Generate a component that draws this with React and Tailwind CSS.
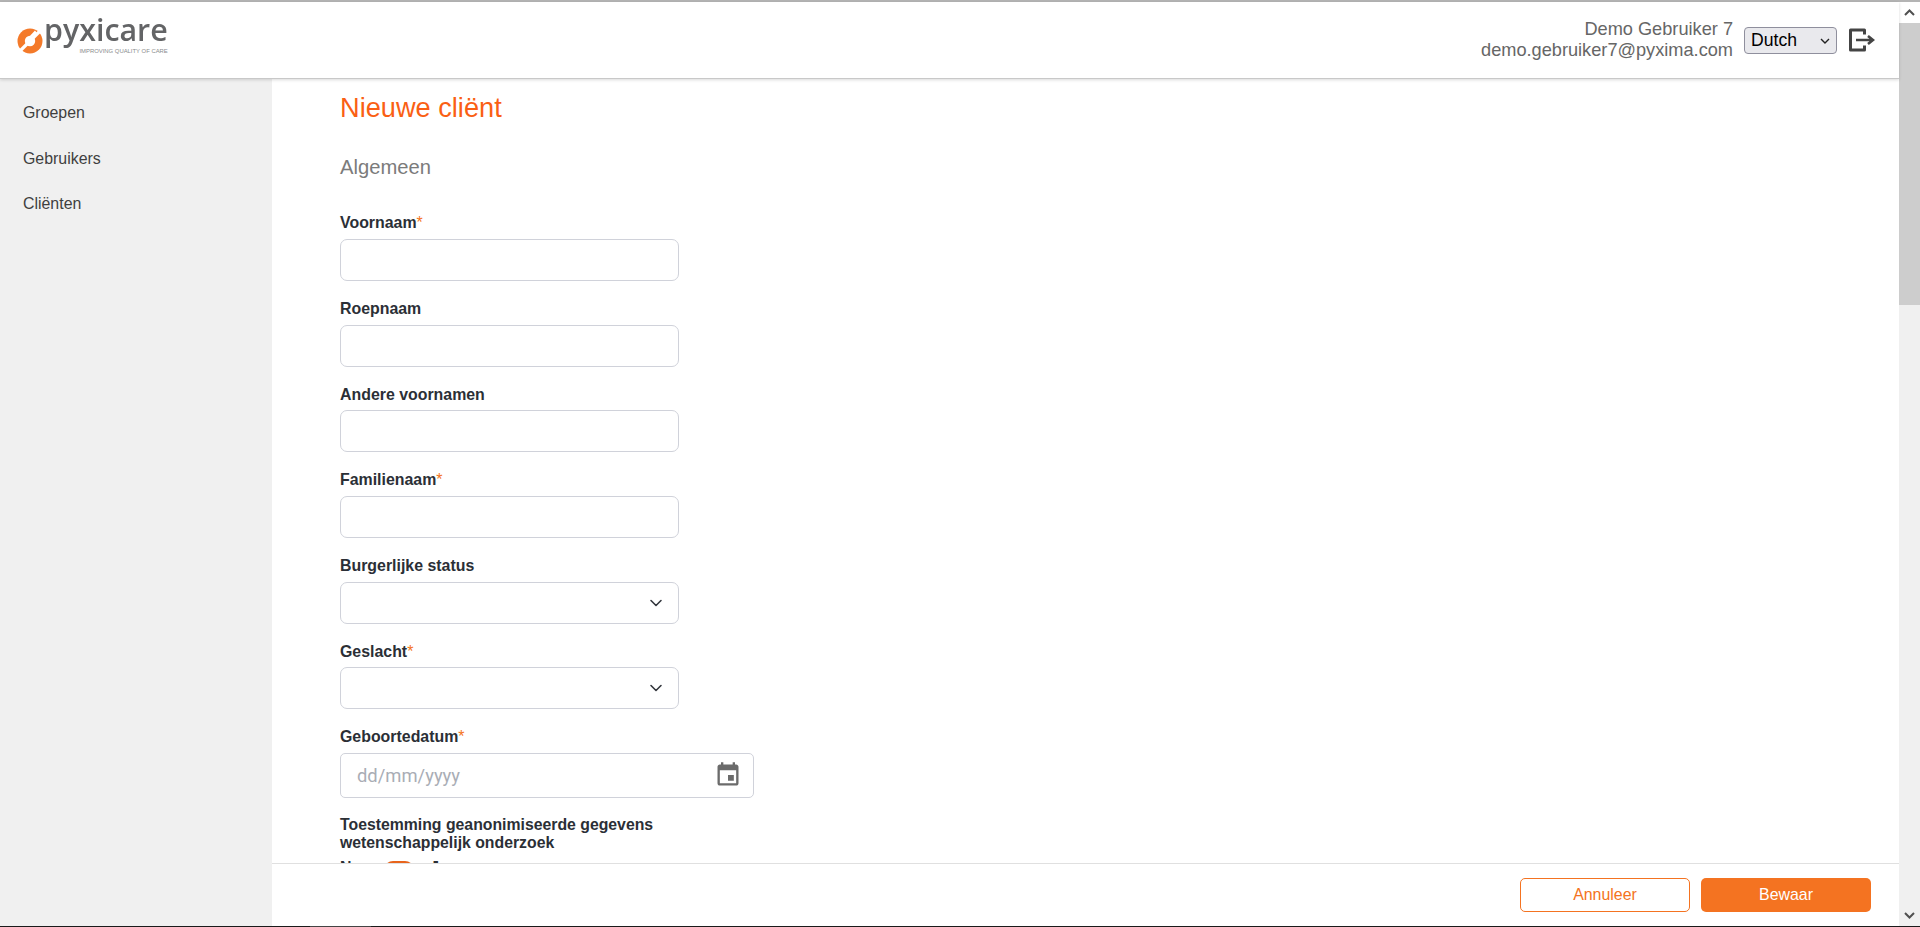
import { ChevronDown } from "lucide-react";

const fields = [
  { label: "Voornaam", required: true },
  { label: "Roepnaam" },
  { label: "Andere voornamen" },
  { label: "Familienaam", required: true },
  { label: "Burgerlijke status", select: true },
  { label: "Geslacht", required: true, select: true },
];

function Label({ text, required }) {
  return (
    <label className="block h-[21px] text-[15.9px] leading-[21px] font-bold text-[#2b2f36] mb-[5.5px]">
      {text}
      {required && <span className="font-normal text-[#f47321]">*</span>}
    </label>
  );
}

function Field({ label, required, select }) {
  return (
    <div className="mb-[17.17px] w-[339px]">
      <Label text={label} required={required} />
      {select ? (
        <div className="relative h-[42px]">
          <select className="h-full w-full appearance-none rounded-[7px] border border-[#d0d2da] bg-white px-3 outline-none" />
          <ChevronDown size={20} strokeWidth={1.9} className="absolute right-[13px] top-[11px] text-[#33363d] pointer-events-none" />
        </div>
      ) : (
        <input className="block h-[42px] w-full rounded-[7px] border border-[#d0d2da] bg-white px-3 outline-none" />
      )}
    </div>
  );
}

function Logo() {
  return (
    <div className="flex h-[40px] items-start select-none">
      <svg width="26" height="26" viewBox="0 0 26 26" className="mt-[8px] blur-[0.3px]">
        <circle cx="13" cy="13" r="12.5" fill="#f47a2a" />
        <circle cx="13" cy="13" r="5.2" fill="#fff" />
        <path d="M2 24 L24 2" stroke="#fff" strokeWidth="3.2" />
        <path d="M13 7.8 L18 2.6 L20 5 L15 9 Z" fill="#fff" />
      </svg>
      <div className="ml-[1px] -mt-[3px] flex flex-col items-end">
        <span className="text-[30.4px] leading-[26px] font-semibold text-[#636466] font-['Open_Sans',sans-serif] blur-[0.3px]">
          pyxicare
        </span>
        <span className="mt-[5px] text-[5.9px] leading-[6px] text-[#8a8b8d] font-['Liberation_Sans',sans-serif]">
          IMPROVING QUALITY OF CARE
        </span>
      </div>
    </div>
  );
}

function Scrollbar() {
  return (
    <div className="flex w-[21px] shrink-0 flex-col bg-[#f0f0f0]">
      <div className="flex h-[21px] items-center justify-center bg-white">
        <svg width="11" height="7" viewBox="0 0 11 7"><path d="M1 6 L5.5 1.5 L10 6" fill="none" stroke="#505050" strokeWidth="2" /></svg>
      </div>
      <div className="h-[282px] bg-[#cdcdcd]" />
      <div className="flex-1" />
      <div className="flex h-[21px] items-center justify-center">
        <svg width="11" height="7" viewBox="0 0 11 7"><path d="M1 1 L5.5 5.5 L10 1" fill="none" stroke="#505050" strokeWidth="2" /></svg>
      </div>
    </div>
  );
}

export default function App() {
  return (
    <div className="flex h-[927px] flex-col overflow-hidden bg-white font-['Liberation_Sans',Arial,sans-serif]">
      <div className="h-[2px] shrink-0 bg-[#b4b4b4]" />

      <div className="flex min-h-0 flex-1">
        <div className="flex min-w-0 flex-1 flex-col">
          {/* HEADER */}
          <header className="relative z-10 flex h-[77px] shrink-0 items-center justify-between border-b border-[#c8c8c8] bg-white pl-[17px] pr-[24px] shadow-[0_1px_3px_rgba(0,0,0,0.15)]">
            <Logo />
            <div className="flex items-center">
              <div className="text-right text-[18.2px] leading-[21px] text-[#666]">
                <div>Demo Gebruiker 7</div>
                <div>demo.gebruiker7@pyxima.com</div>
              </div>
              <div className="relative ml-[11px] mt-[1px] h-[27px] w-[93px]">
                <select className="h-full w-full appearance-none rounded-[4px] border border-[#8f8f9d] bg-[#e9e9ed] pl-[6px] text-[17.6px] leading-[23px] text-black outline-none">
                  <option>Dutch</option>
                </select>
                <svg width="10" height="6" viewBox="0 0 10 6" className="pointer-events-none absolute right-[7px] top-[11px]">
                  <path d="M1 1 L5 5 L9 1" fill="none" stroke="#222" strokeWidth="1.4" />
                </svg>
              </div>
              <svg width="27" height="24" viewBox="0 0 27 24" className="ml-[11px]">
                <path d="M16.5 6.5 V2 H2.5 V22 H16.5 V17.5" fill="none" stroke="#444" strokeWidth="3" strokeLinejoin="round" />
                <path d="M8 12 H24 M20 8 L25 12 L20 16" fill="none" stroke="#444" strokeWidth="2.6" />
              </svg>
            </div>
          </header>

          <div className="flex min-h-0 flex-1">
            {/* SIDEBAR */}
            <aside className="w-[272px] shrink-0 bg-[#f0f0f0] pl-[23px] pt-[25px] text-[15.9px] leading-[18px] text-[#3f3f3f]">
              <div className="mb-[28px]">Groepen</div>
              <div className="mb-[27px]">Gebruikers</div>
              <div>Cliënten</div>
            </aside>

            <div className="flex min-w-0 flex-1 flex-col">
              <main className="min-h-0 flex-1 overflow-hidden pl-[68px]">
                <h1 className="mt-[14px] text-[27.2px] leading-[30px] font-normal text-[#fa5f14]">Nieuwe cliënt</h1>
                <h2 className="mt-[32px] mb-[33.4px] text-[20.2px] leading-[24px] font-normal text-[#7b7b7b]">Algemeen</h2>

                {fields.map((f) => (
                  <Field key={f.label} {...f} />
                ))}

                {/* GEBOORTEDATUM */}
                <div className="mb-[18.6px] w-[414px]">
                  <Label text="Geboortedatum" required />
                  <div className="flex h-[45px] items-center justify-between rounded-[5px] border border-[#d0d2da] pl-[16px] pr-[11px]">
                    <span className="font-['Roboto',sans-serif] text-[18.4px] text-[#a9adb5]">dd/mm/yyyy</span>
                    <svg width="28" height="28" viewBox="0 0 24 24">
                      <path fill="#6b6b6b" d="M17 12h-5v5h5v-5zM16 1v2H8V1H6v2H5c-1.11 0-1.99.9-1.99 2L3 19c0 1.1.89 2 2 2h14c1.1 0 2-.9 2-2V5c0-1.1-.9-2-2-2h-1V1h-2zm3 18H5V8h14v11z" />
                    </svg>
                  </div>
                </div>

                <div className="w-[339px] text-[15.8px] leading-[18px] font-bold text-[#2b2f36]">
                  Toestemming geanonimiseerde gegevens wetenschappelijk onderzoek
                </div>
                <div className="mt-[9px] flex items-start text-[15.9px] leading-[18px] font-bold text-[#2b2f36]">
                  <span className="-mt-[2px]">Nee</span>
                  <span className="ml-[15px] h-[18px] w-[30px] rounded-full bg-[#e8641b]" />
                  <span className="ml-[16px] -mt-[2px]">Ja</span>
                </div>
              </main>

              {/* FOOTER */}
              <footer className="flex h-[63px] shrink-0 justify-end gap-[11px] border-t border-[#e0e0e0] bg-white pr-[28px] pt-[14px]">
                <button className="h-[34px] w-[170px] rounded-[5px] border border-[#f47321] bg-white text-[15.9px] text-[#f47321]">Annuleer</button>
                <button className="h-[34px] w-[170px] rounded-[5px] bg-[#f47321] text-[15.9px] text-white">Bewaar</button>
              </footer>
            </div>
          </div>
        </div>
        <Scrollbar />
      </div>

      {/* onderrand van het venster */}
      <div className="flex h-[1px] shrink-0 bg-[#1a1a1a]">
        <div className="ml-[310px] w-[61px] bg-[#444]" />
      </div>
    </div>
  );
}
